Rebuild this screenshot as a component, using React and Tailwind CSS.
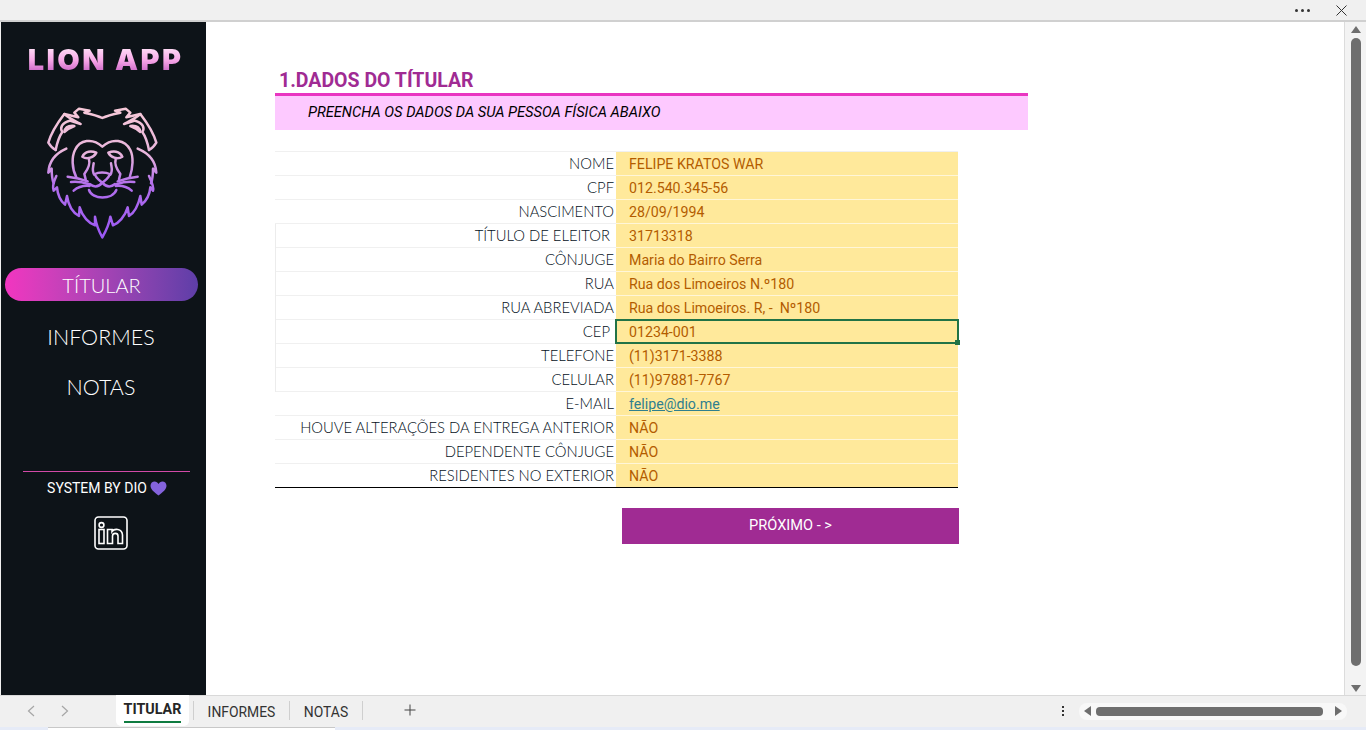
const rows = [
  { label: "NOME", value: "FELIPE KRATOS WAR" },
  { label: "CPF", value: "012.540.345-56" },
  { label: "NASCIMENTO", value: "28/09/1994" },
  { label: "TÍTULO DE ELEITOR", value: "31713318", inset: true, side: true },
  { label: "CÔNJUGE", value: "Maria do Bairro Serra", side: true },
  { label: "RUA", value: "Rua dos Limoeiros N.º180", side: true },
  { label: "RUA ABREVIADA", value: "Rua dos Limoeiros. R, -  Nº180", side: true },
  { label: "CEP", value: "01234-001", inset: true, side: true, selected: true },
  { label: "TELEFONE", value: "(11)3171-3388", side: true },
  { label: "CELULAR", value: "(11)97881-7767", side: true },
  { label: "E-MAIL", value: "felipe@dio.me", link: true },
  { label: "HOUVE ALTERAÇÕES DA ENTREGA ANTERIOR", value: "NÃO" },
  { label: "DEPENDENTE CÔNJUGE", value: "NÃO" },
  { label: "RESIDENTES NO EXTERIOR", value: "NÃO", last: true },
];

function Lion() {
  return (
    <svg width="130" height="145" viewBox="0 0 390 435" fill="none" stroke="url(#mane)" strokeWidth="7.5" strokeLinejoin="round" strokeLinecap="round">
      <defs>
        <linearGradient id="mane" gradientUnits="userSpaceOnUse" x1="0" y1="30" x2="0" y2="410">
          <stop offset="0" stopColor="#f6c8d8" />
          <stop offset="0.35" stopColor="#e8b4dc" />
          <stop offset="0.58" stopColor="#b470ec" />
          <stop offset="1" stopColor="#9a58f4" />
        </linearGradient>
      </defs>
      {/* mane top */}
      <path d="M50 150 C42 146 34 138 28 128 C36 100 56 68 76 42 L118 52 L106 38 L120 26 L152 32 L136 38 C155 42 174 46 190 54 C206 46 225 42 244 38 L228 32 L260 26 L274 38 L262 52 L304 42 C324 68 344 100 352 128 C346 138 338 146 330 150" />
      <path d="M76 42 C92 56 110 64 125 72 L92 62 C68 68 62 85 70 96 C60 110 54 130 50 150" />
      <path d="M304 42 C288 56 270 64 255 72 L288 62 C312 68 318 85 310 96 C320 110 326 130 330 150" />
      <path d="M76 96 C78 84 88 76 106 78 C95 82 85 88 76 96 Z" />
      <path d="M304 96 C302 84 292 76 274 78 C285 82 295 88 304 96 Z" />
      {/* mane sides */}
      <path d="M82 146 C50 160 30 185 28 218 L38 206 C38 222 38 235 44 250" />
      <path d="M296 146 C330 160 350 185 352 218 L342 206 C342 222 342 235 336 250" />
      {/* mane bottom */}
      <path d="M52 228 C44 245 40 262 44 272 L54 262 C56 285 64 302 78 314 L84 288 C88 315 100 337 120 348 L122 322 C130 350 150 370 168 376 L168 350 C172 375 180 395 190 412 C200 395 210 375 214 350 L222 376 C238 370 258 350 266 322 L270 348 C288 337 298 315 304 288 L308 314 C322 302 332 285 334 262 L342 272 C346 262 338 245 330 228" />
      {/* face */}
      <path d="M112 232 C98 205 98 170 108 150 C122 120 160 112 190 140 C220 112 258 120 274 150 C284 170 282 205 272 232" />
      <path d="M130 170 C138 152 158 152 172 158 C165 172 145 180 130 170 Z" />
      <path d="M250 170 C242 152 222 152 208 158 C215 172 235 180 250 170 Z" />
      <path d="M150 178 C155 195 145 210 136 222 L140 238" />
      <path d="M164 190 C162 204 158 214 166 224" />
      <path d="M230 178 C225 195 235 210 244 222 L240 238" />
      <path d="M216 190 C218 204 222 214 214 224" />
      {/* nose and muzzle */}
      <path d="M168 222 C178 216 200 216 212 222 C212 232 200 240 190 248 C180 240 168 232 168 222 Z" />
      <path d="M190 248 C178 262 164 262 152 252" />
      <path d="M190 248 C202 262 216 262 228 252" />
      <path d="M150 270 C160 300 220 300 232 270" />
      {/* whiskers */}
      <path d="M86 230 C105 232 125 236 146 244" />
      <path d="M96 246 C115 244 130 246 148 252" />
      <path d="M104 272 C118 260 132 256 152 258" />
      <path d="M296 230 C277 232 257 236 236 244" />
      <path d="M286 246 C267 244 252 246 234 252" />
      <path d="M278 272 C264 260 250 256 230 258" />
    </svg>
  );
}

function Linkedin() {
  return (
    <svg width="34" height="34" viewBox="0 0 34 34" fill="none" stroke="#fff" strokeWidth="1.6">
      <rect x="1" y="1" width="32" height="32" rx="3.5" />
      <circle cx="7.5" cy="9" r="2.4" />
      <rect x="5" y="13.5" width="5" height="14" />
      <path d="M13.5 13.5 H18 V15.5 C20 12.5 28 12 28.5 19 V27.5 H24 V20 C24 16.5 18.5 16.5 18.5 20 V27.5 H13.5 Z" />
    </svg>
  );
}

function Sidebar() {
  return (
    <aside className="ml-px w-[205px] shrink-0 bg-[#0d1318] flex flex-col items-center">
      <h1 className="mt-[21px] ml-[4px] h-[34px] text-[29px] leading-[34px] font-black tracking-[2.4px] font-['Inter',sans-serif] bg-gradient-to-b from-[#fff2fb] via-[#f8a8e8] to-[#b848b8] bg-clip-text text-transparent">
        LION APP
      </h1>
      <div className="mt-[23px]">
        <Lion />
      </div>
      <nav className="mt-[23px] w-full flex flex-col items-center text-white font-light text-[21.5px] font-['Lato',sans-serif]">
        <div className="-ml-[4px] w-[193px] h-[33px] rounded-[17px] bg-gradient-to-r from-[#f235c0] to-[#5e3ea8] flex items-center justify-center text-[20px]">
          TÍTULAR
        </div>
        <div className="-ml-[5px] h-[50px] mt-[11px] flex items-center">INFORMES</div>
        <div className="-ml-[5px] h-[50px] flex items-center">NOTAS</div>
      </nav>
      <div className="mt-[59px] ml-[6px] w-[167px] h-px bg-[#d24aa8]" />
      <div className="mt-[6px] ml-[7px] flex items-center gap-[3px] text-[14px] text-white font-['Roboto',sans-serif]">
        SYSTEM BY DIO
        <svg width="17" height="15" viewBox="0 0 17 15">
          <path d="M8.5 14.5 C4 11 0.5 8.5 0.5 4.8 C0.5 2 2.5 0.5 4.6 0.5 C6.3 0.5 7.7 1.5 8.5 3 C9.3 1.5 10.7 0.5 12.4 0.5 C14.5 0.5 16.5 2 16.5 4.8 C16.5 8.5 13 11 8.5 14.5 Z" fill="#8463dc" />
        </svg>
      </div>
      <div className="mt-[17px] ml-[14px]">
        <Linkedin />
      </div>
    </aside>
  );
}

function Row({ row }) {
  const border = row.last ? "border-b border-b-black" : "border-b border-b-[#f0f0f0]";
  return (
    <div className={`flex h-6 ${row.side ? "border-l border-l-[#ececec]" : ""}`}>
      <div className={`flex-1 flex items-center justify-end ${row.inset ? "pr-[6px]" : "pr-[2px]"} ${border} text-[14.8px] font-light text-[#04101a] font-['Lato',sans-serif]`}>
        {row.label}
      </div>
      <div className={`relative ${row.selected ? "z-10" : ""} w-[342px] pl-[13px] pt-[3px] flex items-center bg-[#ffe99b] whitespace-pre text-[14.2px] ${row.last ? border : "border-b border-b-[#fff6d8]"} ${row.link ? "text-[#2f7f8f] underline" : "text-[#b35c00]"} font-['Roboto',sans-serif]`}>
        {row.value}
        {row.selected && (
          <>
            <div className="absolute -left-px -top-px -right-px -bottom-px border-2 border-[#217346]" />
            <div className="absolute -right-[2px] -bottom-[2px] w-[5px] h-[5px] bg-[#217346]" />
          </>
        )}
      </div>
    </div>
  );
}

function Form() {
  return (
    <main className="flex-1 bg-white pl-[69px] pt-[46px]">
      <div className="w-[753px]">
        <h2 className="pl-[4px] h-[25px] text-[19.5px] leading-[25px] font-bold text-[#a02b93] font-['Roboto',sans-serif]">1.DADOS DO TÍTULAR</h2>
        <div className="h-[37px] border-t-[3px] border-t-[#e935c1] bg-[#fdc9ff] pl-[33px] flex items-center text-[14.65px] italic text-black font-['Roboto',sans-serif]">
          PREENCHA OS DADOS DA SUA PESSOA FÍSICA ABAIXO
        </div>
      </div>
      <div className="mt-[21px] w-[683px] border-t border-t-[#f0f0f0]">
        {rows.map((r) => (
          <Row key={r.label} row={r} />
        ))}
      </div>
      <button className="mt-[20px] ml-[347px] w-[337px] h-[36px] bg-[#a02b93] text-white text-[14.6px] flex items-center justify-center font-['Roboto',sans-serif]">
        PRÓXIMO - &gt;
      </button>
    </main>
  );
}

function VScroll() {
  return (
    <div className="w-[22px] shrink-0 bg-[#f3f3f3] border-l border-l-[#dcdcdc] flex flex-col items-center pt-[4px] pl-[1px]">
      <div className="w-0 h-0 border-x-[5px] border-x-transparent border-b-[7px] border-b-[#6e6e6e]" />
      <div className="mt-[5px] w-[10px] h-[628px] rounded-[5px] bg-[#6e6e6e]" />
      <div className="mt-[19px] w-0 h-0 border-x-[5px] border-x-transparent border-t-[7px] border-t-[#6e6e6e]" />
    </div>
  );
}

function TabBar() {
  return (
    <div className="h-[32px] shrink-0 bg-[#f0f0f0] border-t border-t-[#d9d9d9] flex items-start relative text-[13.9px] text-[#333] font-['Roboto',sans-serif]">
      <div className="flex items-center h-[30px] pl-[26px] gap-[22px] text-[#a6a6a6]">
        <svg width="11" height="12" viewBox="0 0 11 12" fill="none" stroke="currentColor" strokeWidth="1.2"><path d="M8 1 L2.5 6 L8 11" /></svg>
        <svg width="11" height="12" viewBox="0 0 11 12" fill="none" stroke="currentColor" strokeWidth="1.2"><path d="M3 1 L8.5 6 L3 11" /></svg>
      </div>
      <div className="ml-[46px] -mt-px w-[73px] h-[31px] bg-white rounded-b-[5px] flex flex-col items-center pt-[5px]">
        <span className="font-bold text-[14.3px] text-[#262626] leading-[18px]">TITULAR</span>
        <div className="mt-[3px] w-[57px] h-[2px] bg-[#107c41]" />
      </div>
      <div className="ml-[4px] mt-[5px] w-px h-[19px] bg-[#cfcfcf]" />
      <div className="w-[95px] h-[30px] pt-[2px] flex items-center justify-center">INFORMES</div>
      <div className="mt-[5px] w-px h-[19px] bg-[#cfcfcf]" />
      <div className="w-[72px] h-[30px] pt-[2px] flex items-center justify-center">NOTAS</div>
      <div className="mt-[5px] w-px h-[19px] bg-[#cfcfcf]" />
      <svg className="ml-[41px] mt-[8px]" width="12" height="12" viewBox="0 0 12 12" stroke="#444" strokeWidth="1"><path d="M6 0.5 V11.5 M0.5 6 H11.5" /></svg>
      <div className="ml-auto flex items-center h-[30px]">
        <div className="flex flex-col gap-[2px] mr-[15px]">
          <div className="w-[2px] h-[2px] bg-[#333]" />
          <div className="w-[2px] h-[2px] bg-[#333]" />
          <div className="w-[2px] h-[2px] bg-[#333]" />
        </div>
        <div className="w-[268px] h-[17px] mr-[19px] rounded-[8px] bg-[#f8f8f8] flex items-center pl-[5px]">
          <div className="w-0 h-0 border-y-[5px] border-y-transparent border-r-[7px] border-r-[#6e6e6e]" />
          <div className="ml-[5px] w-[227px] h-[9px] rounded-[4px] bg-[#6e6e6e]" />
          <div className="ml-[12px] w-0 h-0 border-y-[5px] border-y-transparent border-l-[7px] border-l-[#6e6e6e]" />
        </div>
      </div>
    </div>
  );
}

export default function App() {
  return (
    <div className="w-[1366px] h-[730px] overflow-hidden flex flex-col bg-[#f0f0f0]">
      <div className="h-[22px] shrink-0 bg-[#f0f0f0] border-b-2 border-b-[#d0d0d0] flex items-center justify-end pr-[19px] gap-[26px]">
        <div className="flex gap-[3px]">
          <div className="w-[3px] h-[3px] rounded-full bg-[#333]" />
          <div className="w-[3px] h-[3px] rounded-full bg-[#333]" />
          <div className="w-[3px] h-[3px] rounded-full bg-[#333]" />
        </div>
        <svg width="11" height="11" viewBox="0 0 11 11" stroke="#333" strokeWidth="1"><path d="M0.5 0.5 L10.5 10.5 M10.5 0.5 L0.5 10.5" /></svg>
      </div>
      <div className="flex-1 flex min-h-0">
        <Sidebar />
        <Form />
        <VScroll />
      </div>
      <TabBar />
      <div className="h-[3px] shrink-0 bg-[#e6ebf7] flex pl-[48px]">
        <div className="w-[287px] bg-white border-t border-t-[#c8c8c8]" />
      </div>
    </div>
  );
}
